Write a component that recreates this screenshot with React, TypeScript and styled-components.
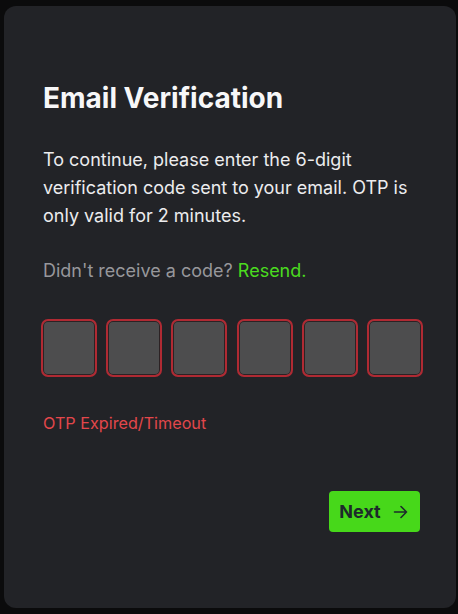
import React from "react";
import styled, { createGlobalStyle } from "styled-components";

const Global = createGlobalStyle`
  html, body { margin: 0; padding: 0; background: #0b0b0c; }
  body { font-family: Inter, "Noto Sans", sans-serif; -webkit-font-smoothing: antialiased; }
  * { box-sizing: border-box; }
`;

const Page = styled.div`
  width: 458px;
  height: 614px;
  padding: 6px 2px 6px 4px;
`;

const Card = styled.section`
  width: 452px;
  height: 602px;
  background: #222327;
  border-radius: 12px;
  padding: 75px 33px 0 37px;
  display: flex;
  flex-direction: column;
`;

const Title = styled.h1`
  margin: 0 0 0 2px;
  font-size: 28px;
  line-height: 34px;
  font-weight: 700;
  color: #f7f7f8;
  letter-spacing: 0;
`;

const Text = styled.p<{ $muted?: boolean }>`
  margin: 0 0 0 2px;
  font-size: 18px;
  line-height: 28px;
  color: ${(p) => (p.$muted ? "#97979b" : "#ececee")};
`;

const Intro = styled(Text)`
  margin-top: 30.5px;
`;

const ResendRow = styled(Text)`
  margin-top: 27px;
`;

const Link = styled.span`
  color: #4bdb1f;
`;

const OtpRow = styled.div`
  margin-top: 34.5px;
  display: grid;
  grid-template-columns: repeat(6, 56px);
  column-gap: 9.2px;
`;

const OtpBox = styled.div<{ $error?: boolean }>`
  height: 58px;
  border-radius: 7px;
  background: #4d4d4e;
  border: 2px solid ${(p) => (p.$error ? "#b02a33" : "#555")};
  box-shadow: inset 0 0 0 1px #2c2224;
`;

const ErrorText = styled.p`
  margin: 36px 0 0 2px;
  font-size: 16.2px;
  line-height: 20px;
  color: #e3474b;
`;

const Footer = styled.div`
  margin-top: 58px;
  display: flex;
  justify-content: flex-end;
  padding-right: 3px;
`;

const NextButton = styled.button`
  width: 91px;
  height: 41px;
  border: none;
  border-radius: 4px;
  background: #47d81a;
  color: #1d2a2b;
  font-family: Inter, "Noto Sans", sans-serif;
  font-size: 18px;
  font-weight: 700;
  display: flex;
  align-items: center;
  justify-content: center;
  gap: 12px;
  padding: 0 2px 0 0;
`;

const Arrow = () => (
  <svg width="15" height="14" viewBox="0 0 15 14" fill="none" stroke="#1d2a2b" strokeWidth="1.6" strokeLinecap="round" strokeLinejoin="round">
    <path d="M1.5 7h12M8 1.5L13.5 7 8 12.5" />
  </svg>
);

export default function App() {
  return (
    <>
      <Global />
      <Page>
        <Card>
          <Title>Email Verification</Title>
          <Intro>
            To continue, please enter the 6-digit verification code sent to your email. OTP is only valid for 2 minutes.
          </Intro>
          <ResendRow $muted>
            Didn't receive a code? <Link>Resend.</Link>
          </ResendRow>
          <OtpRow>
            {Array.from({ length: 6 }).map((_, i) => (
              <OtpBox key={i} $error />
            ))}
          </OtpRow>
          <ErrorText>OTP Expired/Timeout</ErrorText>
          <Footer>
            <NextButton>
              Next
              <Arrow />
            </NextButton>
          </Footer>
        </Card>
      </Page>
    </>
  );
}
